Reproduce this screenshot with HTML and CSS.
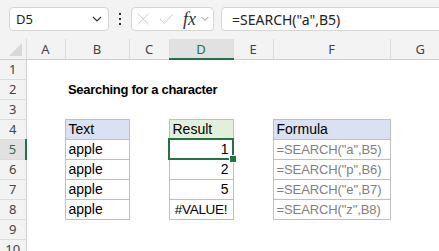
FILE: index.html
```html
<!DOCTYPE html>
<html lang="en">

<head>
    <meta charset="UTF-8">
    <title>SEARCH</title>
    <link rel="stylesheet" href="styles.css">
</head>

<body>
    <div class="toolbar">
        <div class="namebox">
            <span>D5</span>
            <svg width="10" height="6" viewBox="0 0 10 6"><path d="M1 1 L5 5 L9 1" fill="none" stroke="#333" stroke-width="1.2"/></svg>
        </div>
        <div class="dots"><i></i><i></i><i></i></div>
        <div class="fxbox">
            <svg width="14" height="14" viewBox="0 0 14 14"><path d="M1 1 L13 13 M13 1 L1 13" stroke="#c8c8c8" stroke-width="1.1"/></svg>
            <svg width="16" height="14" viewBox="0 0 16 14"><path d="M1 7 L6 12 L15 2" fill="none" stroke="#c8c8c8" stroke-width="1.1"/></svg>
            <span class="fx">fx</span>
            <svg width="9" height="6" viewBox="0 0 9 6"><path d="M1 1 L4.5 4.5 L8 1" fill="none" stroke="#888" stroke-width="1.1"/></svg>
        </div>
        <div class="formula">=SEARCH("a",B5)</div>
    </div>

    <table class="sheet">
        <colgroup>
            <col style="width:26px">
            <col style="width:39px">
            <col style="width:64px">
            <col style="width:40px">
            <col style="width:64px">
            <col style="width:40px">
            <col style="width:117px">
            <col style="width:60px">
        </colgroup>
        <tr class="colhead">
            <th class="corner"><span class="tri"></span></th>
            <th>A</th><th>B</th><th>C</th><th class="active">D</th><th>E</th><th>F</th><th>G</th>
        </tr>
        <tr><th class="rowhead">1</th><td></td><td></td><td></td><td></td><td></td><td></td><td></td></tr>
        <tr><th class="rowhead">2</th><td></td><td class="title">Searching for a character</td><td></td><td></td><td></td><td></td><td></td></tr>
        <tr><th class="rowhead">3</th><td></td><td></td><td></td><td></td><td></td><td></td><td></td></tr>
        <tr>
            <th class="rowhead">4</th><td></td>
            <td class="box head-blue">Text</td><td></td>
            <td class="box head-green">Result</td><td></td>
            <td class="box head-blue">Formula</td><td></td>
        </tr>
        <tr>
            <th class="rowhead active">5</th><td></td>
            <td class="box">apple</td><td></td>
            <td class="box num sel">1</td><td></td>
            <td class="box code">=SEARCH("a",B5)</td><td></td>
        </tr>
        <tr>
            <th class="rowhead">6</th><td></td>
            <td class="box">apple</td><td></td>
            <td class="box num">2</td><td></td>
            <td class="box code">=SEARCH("p",B6)</td><td></td>
        </tr>
        <tr>
            <th class="rowhead">7</th><td></td>
            <td class="box">apple</td><td></td>
            <td class="box num">5</td><td></td>
            <td class="box code">=SEARCH("e",B7)</td><td></td>
        </tr>
        <tr>
            <th class="rowhead">8</th><td></td>
            <td class="box">apple</td><td></td>
            <td class="box err">#VALUE!</td><td></td>
            <td class="box code">=SEARCH("z",B8)</td><td></td>
        </tr>
        <tr><th class="rowhead">9</th><td></td><td></td><td></td><td></td><td></td><td></td><td></td></tr>
        <tr><th class="rowhead">10</th><td></td><td></td><td></td><td></td><td></td><td></td><td></td></tr>
    </table>
</body>

</html>
```

FILE: styles.css
```css
body {
    margin: 0;
    background-color: #fff;
    font-family: "Liberation Sans", Arial, sans-serif;
    overflow: hidden;
}

.toolbar {
    height: 39px;
    background-color: #f3f3f3;
    display: flex;
    align-items: center;
    padding-left: 9px;
    box-sizing: border-box;
    padding-bottom: 1px;
}

.namebox,
.fxbox,
.formula {
    height: 24px;
    box-sizing: border-box;
    background-color: #fff;
    border: 1px solid #d6d6d6;
    border-radius: 4px;
    display: flex;
    align-items: center;
}

.namebox {
    width: 100px;
    padding: 0 6px 0 6px;
    justify-content: space-between;
    font-family: "Noto Sans", sans-serif;
    font-size: 13px;
    color: #222;
}

.dots {
    width: 22px;
    display: flex;
    flex-direction: column;
    align-items: center;
    gap: 3px;
}

.dots i {
    width: 2px;
    height: 2px;
    background-color: #333;
}

.fxbox {
    width: 83px;
    padding: 0 4px 0 5px;
    gap: 9px;
}

.fx {
    font-family: "Liberation Serif", serif;
    font-style: italic;
    font-size: 18px;
    color: #333;
    margin-left: 1px;
    margin-right: -4px;
}

.formula {
    margin-left: 7px;
    flex: 1;
    margin-right: -10px;
    padding-left: 10px;
    font-family: "Noto Sans", sans-serif;
    font-size: 14px;
    color: #222;
}

.sheet {
    border-collapse: collapse;
    table-layout: fixed;
    width: 450px;
}

.sheet tr {
    height: 20px;
}

.sheet td {
    padding: 0 0 0 3px;
    font-size: 14px;
    white-space: nowrap;
    overflow: visible;
    color: #000;
    line-height: 19px;
}

.colhead th {
    background-color: #f3f3f3;
    border-left: 1px solid #dcdcdc;
    border-bottom: 1px solid #cfcfcf;
    font-family: "Noto Sans", sans-serif;
    font-weight: normal;
    font-size: 13px;
    color: #444;
    padding: 0;
    height: 19px;
}

.colhead th.corner {
    position: relative;
    border-left: none;
}

.tri {
    position: absolute;
    right: 4px;
    bottom: 3px;
    width: 0;
    height: 0;
    border-left: 13px solid transparent;
    border-bottom: 13px solid #d8d8d8;
}

.colhead th.active {
    background-color: #e1e1e1;
    border-bottom: 2px solid #217346;
    color: #217346;
}

.rowhead {
    background-color: #f3f3f3;
    border-right: 1px solid #cfcfcf;
    border-bottom: 1px solid #dcdcdc;
    font-family: "Noto Sans", sans-serif;
    font-weight: normal;
    font-size: 13px;
    color: #444;
    padding: 0;
}

.rowhead.active {
    background-color: #e1e1e1;
    border-right: 2px solid #217346;
    color: #217346;
}

.sheet td.title {
    font-weight: bold;
    font-size: 13px;
    letter-spacing: -0.3px;
}

.box {
    border: 1px solid #bfbfbf;
}

.head-blue {
    background-color: #d9e1f2;
}

.head-green {
    background-color: #e2efda;
}

.sheet td.num {
    text-align: right;
    padding-right: 4px;
}

.sheet td.err {
    text-align: center;
    font-size: 13.5px;
    letter-spacing: -0.3px;
    padding: 0;
}

.sheet td.code {
    color: #7f7f7f;
    font-size: 13px;
    letter-spacing: -0.1px;
}

.sel {
    position: relative;
}

.sel::after {
    content: "";
    position: absolute;
    left: -2px;
    top: -2px;
    right: -1px;
    bottom: -1px;
    border: 2px solid #217346;
}

.sel::before {
    content: "";
    position: absolute;
    right: -4px;
    bottom: -4px;
    width: 6px;
    height: 6px;
    background-color: #217346;
    border: 1px solid #fff;
    z-index: 1;
}
```
